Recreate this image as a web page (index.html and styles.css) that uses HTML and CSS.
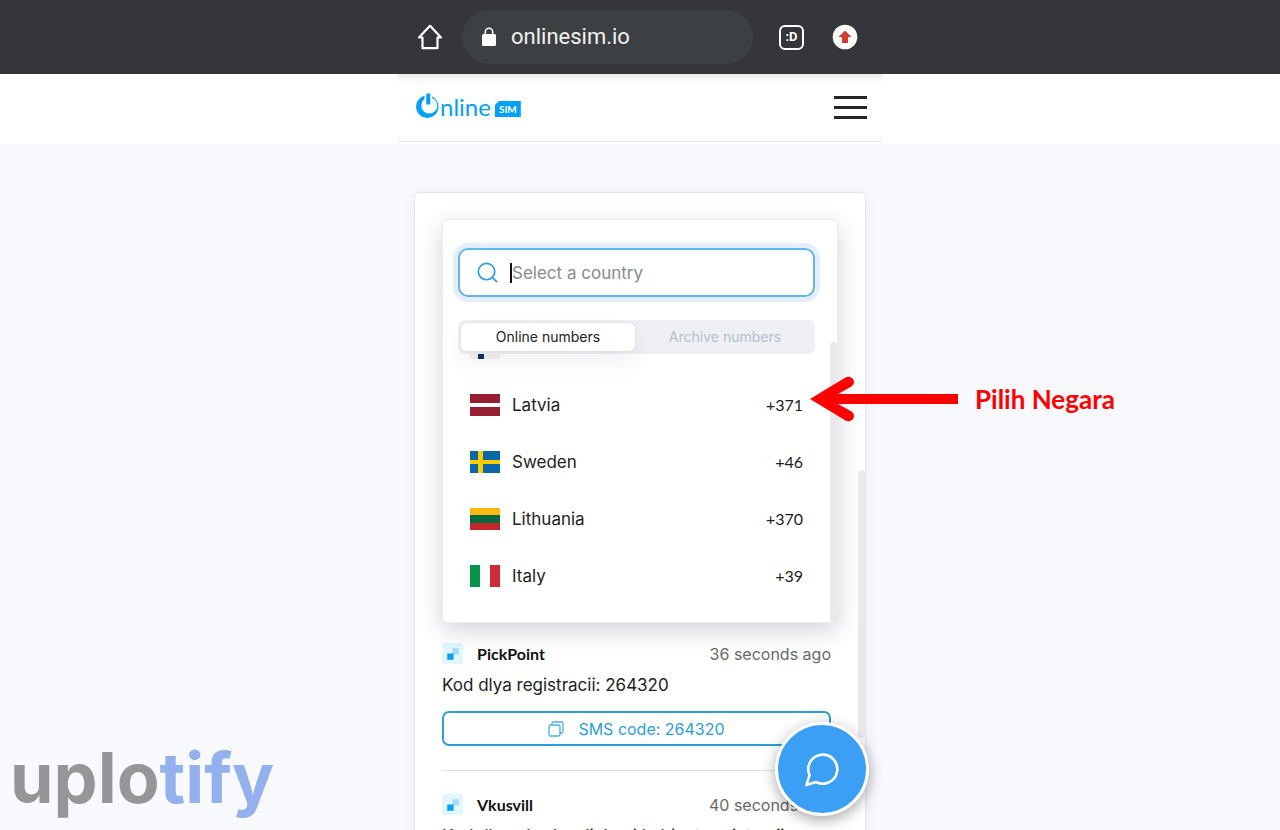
FILE: index.html
```html
<!DOCTYPE html>
<html lang="en">
<head>
<meta charset="UTF-8">
<meta name="viewport" content="width=device-width, initial-scale=1">
<title>OnlineSIM</title>
<link rel="stylesheet" href="styles.css">
</head>
<body>

<!-- BROWSER BAR -->
<div class="browser">
  <div class="column browser-row">
    <button class="icon-btn" aria-label="Home">
      <svg width="26" height="26" viewBox="0 0 26 26" fill="none" stroke="#fff" stroke-width="2.2" stroke-linejoin="round"><path d="M2 13.500 13 1.800l11 11.700h-3.500v10.700h-15V13.500z"/></svg>
    </button>
    <div class="address">
      <svg width="16" height="20" viewBox="0 0 16 20"><rect x="1" y="7" width="14" height="12" rx="1.5" fill="#fff"/><path d="M4.300 8V5a3.700 3.700 0 0 1 7.400 0v3" fill="none" stroke="#fff" stroke-width="1.5"/></svg>
      <span>onlinesim.io</span>
    </div>
    <button class="tabs-btn" aria-label="Tabs">:D</button>
    <button class="icon-btn" aria-label="Update">
      <svg width="26" height="26" viewBox="0 0 26 26"><circle cx="13" cy="13" r="12.3" fill="#fff"/><path d="M13 6.500 19.500 13H16v6h-6v-6H6.500z" fill="#d33b2c"/></svg>
    </button>
  </div>
</div>

<!-- SITE HEADER -->
<header class="site-header">
  <div class="column header-row">
    <a class="logo" href="#">
      <svg width="24" height="30" viewBox="0 0 24 30"><path fill="#03a0f8" fill-rule="evenodd" d="M11.300 3.500a11.200 11.200 0 1 1 0 22.400a11.200 11.200 0 1 1 0-22.400zM13.300 5.500a8 8 0 1 0 0 16a8 8 0 1 0 0-16z"/><path fill="#fff" d="M8.500 2H16v5.500l-1.500 3h-6z"/><path fill="#03a0f8" d="M10.300 1.500h4v11h-4z"/></svg>
      <span class="logo-text">nline</span>
      <span class="logo-sim">SIM</span>
    </a>
    <button class="menu-btn" aria-label="Menu"><i></i><i></i><i></i></button>
  </div>
</header>

<!-- CONTENT -->
<main class="column content">
  <section class="card">

    <div class="dropdown">
      <label class="search">
        <svg width="21" height="21" viewBox="0 0 22 22" fill="none" stroke="#2a9fe0" stroke-width="1.8" stroke-linecap="round"><circle cx="10" cy="10" r="8.600"/><path d="m16 16 4.500 4.500"/></svg>
        <span class="caret"></span>
        <input type="text" placeholder="Select a country" aria-label="Select a country">
      </label>

      <div class="tabs">
        <button class="tab active">Online numbers</button>
        <button class="tab">Archive numbers</button>
      </div>

      <ul class="countries">
        <li><svg class="flag" viewBox="0 0 30 22"><path fill="#f1f1f1" d="M0 0h30v22H0z"/><path fill="#0a2f73" d="M8 0h6v22H8zM0 8h30v6H0z"/></svg></li>
        <li><svg class="flag" viewBox="0 0 30 22"><path fill="#981e32" d="M0 0h30v22H0z"/><path fill="#fff" d="M0 9h30v4H0z"/></svg><span>Latvia</span><b>+371</b></li>
        <li><svg class="flag" viewBox="0 0 30 22"><path fill="#0a68a8" d="M0 0h30v22H0z"/><path fill="#fc0" d="M8 0h5v22H8zM0 9h30v4H0z"/></svg><span>Sweden</span><b>+46</b></li>
        <li><svg class="flag" viewBox="0 0 30 22"><path fill="#fdb813" d="M0 0h30v8H0z"/><path fill="#04693f" d="M0 7h30v8H0z"/><path fill="#c1272d" d="M0 15h30v7H0z"/></svg><span>Lithuania</span><b>+370</b></li>
        <li><svg class="flag" viewBox="0 0 30 22"><path fill="#fff" d="M0 0h30v22H0z"/><path fill="#049348" d="M0 0h10v22H0z"/><path fill="#cf2b37" d="M20 0h10v22H20z"/></svg><span>Italy</span><b>+39</b></li>
      </ul>
      <div class="list-scroll"></div>
    </div>

    <article class="message">
      <div class="message-head">
        <svg width="21" height="21" viewBox="0 0 20 20"><rect width="20" height="20" rx="2" fill="#e3f5ff"/><path fill="#a5dcfd" d="M10 5h6v6h-6z"/><path fill="#03a0f8" d="M5 10h6v6H5z"/></svg>
        <h3>PickPoint</h3>
        <time>36 seconds ago</time>
      </div>
      <p>Kod dlya registracii: 264320</p>
      <button class="code-btn">
        <svg width="16" height="16" viewBox="0 0 16 16" fill="none" stroke="#48b1e6" stroke-width="1.3"><rect x="1" y="4" width="11" height="11" rx="1.5"/><path d="M4 4V2.500Q4 1 5.500 1h8Q15 1 15 2.500v8q0 1.500-1.500 1.500H12"/></svg>
        SMS code: 264320
      </button>
    </article>

    <article class="message">
      <div class="message-head">
        <svg width="21" height="21" viewBox="0 0 20 20"><rect width="20" height="20" rx="2" fill="#e3f5ff"/><path fill="#a5dcfd" d="M10 5h6v6h-6z"/><path fill="#03a0f8" d="M5 10h6v6H5z"/></svg>
        <h3>Vkusvill</h3>
        <time>40 seconds ago</time>
      </div>
      <p>Kod dlya vhoda v lichnyj kabinet registracii</p>
    </article>

    <div class="card-scroll"></div>
  </section>

  <button class="chat" aria-label="Chat">
    <svg width="36" height="36" viewBox="0 0 36 36" fill="none" stroke="#fff" stroke-width="2.6" stroke-linejoin="round"><path d="M5.500 24A14.500 14.500 0 1 1 12 31L2.500 34z"/></svg>
  </button>

  <div class="callout">
    <svg width="148" height="46" viewBox="0 0 148 46"><path fill="red" d="M0 23 35.500 1.500c6-3 12 4.500 6 9L28 18h120v10H28l13.500 7.500c6 4.500 0 12-6 9z"/></svg>
    <strong>Pilih Negara</strong>
  </div>
</main>

<div class="watermark">uplo<span>tify</span></div>

</body>
</html>
```
FILE: styles.css
```css
/* -------- RESET -------- */
*{margin:0;padding:0;box-sizing:border-box}

/* -------- ROOT -------- */
:root{
  --bg:#f8f9fd;
  --bar:#35363a;
  --blue:#2a9fd8;
  --brand:#03a0f8;
  --text:#222;
}

body{
  font-family:Inter,"Liberation Sans",sans-serif;
  font-size:17px;
  line-height:20px;
  background:var(--bg);
  color:var(--text);
  height:100vh;
  overflow:hidden;
}
button{font:inherit;border:0;background:none;cursor:pointer}
svg{display:block;flex:none}
.column{width:100%;max-width:486px;margin:0 auto}

/* -------- BROWSER BAR -------- */
.browser{background:var(--bar)}
.browser-row{display:flex;align-items:center;height:74px;padding:0 25px 0 20px}
.address{
  display:flex;align-items:center;gap:14px;flex:1;
  height:54px;margin:0 26px 0 19px;padding:0 19px;
  border-radius:27px;background:#3c4043;
  font-family:Roboto,sans-serif;font-size:22px;color:#f1f1f1;
}
.tabs-btn{
  width:25px;height:25px;margin-right:28px;
  border:2px solid #fff;border-radius:6px;
  font-family:Roboto,sans-serif;font-size:13px;font-weight:700;line-height:20px;color:#fff;
}

/* -------- SITE HEADER -------- */
.site-header{background:#fff;height:70px}
.header-row{
  display:flex;align-items:center;justify-content:space-between;
  height:68px;padding:0 16px 0 19px;
  border-bottom:1px solid #e4e4e6;
  background:linear-gradient(#ececec,#fff 9px);
}
.logo{display:flex;align-items:center;padding-bottom:2px;color:var(--brand);text-decoration:none}
.logo-text{font-family:Lato,sans-serif;font-size:24px;line-height:26px}
.logo-sim{
  margin:5px 0 0 4px;padding:0 4px;
  background:var(--brand);color:#fff;
  clip-path:polygon(4px 0,100% 0,100% 100%,0 100%,0 4px);
  font-family:Lato,sans-serif;font-size:10px;font-weight:700;line-height:16px;
}
.menu-btn{display:flex;flex-direction:column;gap:7px;width:33px}
.menu-btn i{height:3px;background:#252429}

/* -------- CARD -------- */
.content{position:relative;padding:48px 17px 0}
.card{
  position:relative;
  padding:26px 27px 60px;
  border:1px solid #e4e5ec;border-radius:6px;
  background:#fff;
  box-shadow:0 4px 16px rgba(40,60,110,.07);
}

/* -------- COUNTRY DROPDOWN -------- */
.dropdown{
  position:relative;
  padding:28px 22px 0 15px;
  border:1px solid #ebedf0;border-radius:6px;
  background:#fff;
  box-shadow:0 8px 24px rgba(40,45,75,.2);
}
.search{
  display:flex;align-items:center;
  height:49px;padding:0 17px;
  border:2px solid #5fb8e6;border-radius:10px;
  box-shadow:0 0 0 5px #e4eefe;
}
.caret{width:2px;height:20px;margin-left:12px;background:#111}
.search input{
  flex:1;min-width:0;border:0;outline:0;background:none;
  font:inherit;color:var(--text);
}
.search input::placeholder{color:#8a8a8a;opacity:1}
.tabs{
  position:relative;z-index:1;
  display:flex;gap:3px;height:34px;margin-top:23px;padding:3px;
  border-radius:7px;background:#eff0f4;
}
.tab{flex:1;border-radius:6px;font-size:14px;color:#b3bfcd}
.tab.active{background:#fff;color:var(--text);box-shadow:0 0 3px #d5d8e2,0 12px 24px rgba(0,0,0,.06)}

/* overflow hides the row scrolled under the tabs */
.countries{
  display:flex;flex-direction:column;justify-content:flex-end;
  height:268px;padding:0 12px 18px;
  overflow:hidden;list-style:none;
}
.countries li{display:flex;align-items:center;flex:none;height:57px}
.countries span{flex:1;margin-left:12px}
.countries b{font-family:Lato,sans-serif;font-size:16px;font-weight:400}
.flag{width:30px;height:22px}
.list-scroll,.card-scroll{position:absolute;width:7px;border-radius:4px;background:#e9e9ea}
.list-scroll{top:122px;right:0;bottom:0}
.card-scroll{top:277px;right:0;height:268px}

/* -------- MESSAGES -------- */
.message{margin-right:7px;padding:20px 0 24px}
.message + .message{border-top:1px solid #dfe0e2;padding-top:23px}
.message-head{display:flex;align-items:center}
.message h3{flex:1;margin-left:14px;font-family:Lato,sans-serif;font-size:16px;font-weight:700;color:#111}
.message time{font-size:16px;color:#696969}
.message p{margin-top:11px;white-space:nowrap}
.code-btn{
  display:flex;align-items:center;justify-content:center;gap:14px;
  width:100%;height:35px;margin-top:16px;
  border:2px solid var(--blue);border-radius:7px;
  font-size:16px;color:var(--blue);
}

/* -------- OVERLAYS -------- */
.chat{
  position:absolute;top:578px;right:14px;
  display:flex;align-items:center;justify-content:center;
  width:94px;height:94px;
  border:3px solid #fff;border-radius:50%;
  background:#3a9ff5;
  box-shadow:0 4px 14px rgba(0,0,0,.35);
}
.callout{
  position:absolute;top:232px;left:413px;
  display:flex;align-items:center;gap:17px;
  white-space:nowrap;
}
.callout strong{font-family:Lato,sans-serif;font-size:26px;line-height:30px;color:red}

/* -------- WATERMARK -------- */
.watermark{
  position:fixed;left:10px;bottom:12px;
  font-size:70px;font-weight:700;line-height:80px;color:#969698;
}
.watermark span{color:#93b1ed}
```
